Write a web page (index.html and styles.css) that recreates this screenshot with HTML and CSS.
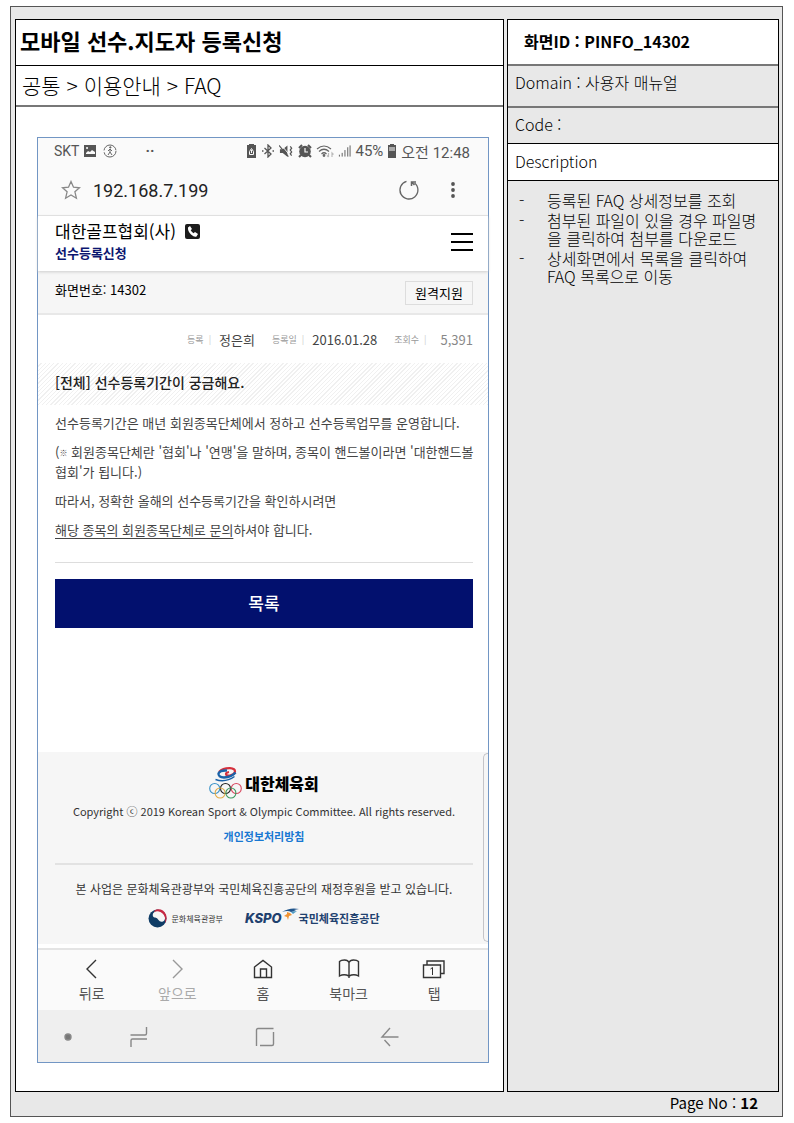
FILE: index.html
```html
<!DOCTYPE html>
<html lang="ko">
<head>
  <meta charset="UTF-8" />
  <meta name="viewport" content="width=device-width, initial-scale=1" />
  <title>PINFO_14302 - FAQ</title>
  <link rel="stylesheet" href="styles.css">
</head>
<body>
<div class="sheet">
  <div class="panels">
    <main class="panel panel-screen">
      <h1>모바일 선수.지도자 등록신청</h1>
      <p class="path">공통 &gt; 이용안내 &gt; FAQ</p>

      <div class="phone">
        <!-- 상태바 -->
        <div class="status">
          <span>SKT</span>
          <svg width="14" height="14" viewBox="0 0 14 14"><path fill="#555" fill-rule="evenodd" d="M1 1h12v12H1zM3 10h9V8L9 6 7 8 5 7 3 9zM4 3a1 1 0 1 0 .1 0z"/></svg>
          <svg class="walk" width="14" height="14" viewBox="0 0 14 14" fill="none" stroke="#666"><circle cx="7" cy="7" r="6" stroke-dasharray="17 2"/><circle cx="7.3" cy="3.4" r=".7" fill="#666"/><path d="M7 5v3l2 3M7 8l-2 3M5 7l2-2 2 2"/></svg>
          <span class="dots">··</span>
          <div class="status-right">
            <svg width="11" height="14" viewBox="0 0 11 14"><path fill="#555" d="M3 0h5v1h2v13H1V1h2z"/><path fill="none" stroke="#fafafa" d="M3.500 7.500l2-3 2 3M3.500 7.500v3h4v-3M5.500 6v3"/></svg>
            <svg width="14" height="14" viewBox="0 0 14 14" fill="none" stroke="#555" stroke-width="1.300"><path d="M3.500 4l6.500 6-3 3V1l3 3-6.500 6"/><path d="M1 7h1.500M11.500 7H13"/></svg>
            <svg width="15" height="14" viewBox="0 0 16 14"><path fill="#555" d="M1 5h3l5-4v12L4 9H1z"/><path fill="none" stroke="#fafafa" stroke-width="1" d="M2 0l9 11"/><path fill="none" stroke="#555" stroke-width="1.300" d="M0 1l10 12M12 2l1.500 2-1.500 2 1.500 2-1.500 2 1.500 2"/></svg>
            <svg width="14" height="14" viewBox="0 0 14 14"><circle cx="7" cy="7.500" r="5.800" fill="#555"/><path fill="none" stroke="#555" stroke-width="2" d="M1 4l3-3M10 1l3 3M3 11l-2 2M11 11l2 2"/><path fill="none" stroke="#fafafa" stroke-width="1.200" d="M7 4v4h3"/></svg>
            <svg width="18" height="14" viewBox="0 0 18 14" fill="none" stroke="#666" stroke-width="1.200"><path d="M1 5q7-6 14 0M3 7.500q5-4.500 10 0M5.500 10q2.500-2.500 5 0"/><circle cx="8" cy="11.500" r=".8" fill="#666"/><path stroke="#bbb" d="M12.500 9v4M11 11.500l1.500 1.500M16 13V9l1.500 1.500"/></svg>
            <svg width="13" height="14" viewBox="0 0 14 14" fill="none" stroke="#555"><path d="M1.500 11v2M4.500 9v4M7.500 6v7M10.500 3v10M13 1v12"/></svg>
            <span>45%</span>
            <svg width="10" height="14" viewBox="0 0 10 14"><path fill="#555" d="M3 0h4v1h2v13H1V1h2z"/><path fill="#aaa" d="M2 3h6v4H2z"/></svg>
            <span>오전 12:48</span>
          </div>
        </div>

        <!-- 주소창 -->
        <div class="address">
          <button type="button" aria-label="즐겨찾기"><svg width="20" height="20" viewBox="0 0 20 20" fill="none" stroke="#888" stroke-width="1.300"><path d="M10 1.500l2.500 5.700 6 .6-4.600 4 1.500 6.400L10 15l-5.400 3.200 1.500-6.400-4.600-4 6-.6z"/></svg></button>
          <input type="text" value="192.168.7.199" aria-label="주소">
          <button type="button" aria-label="새로고침"><svg width="22" height="22" viewBox="0 0 22 22" fill="none" stroke="#666" stroke-width="1.300"><path d="M8.500 2.300a9 9 0 1 0 8 1.600"/><path d="M13.500 7V3h4.500M13.500 3l3 3" stroke-width="1.500"/></svg></button>
          <button type="button" class="more" aria-label="더보기"><svg width="6" height="18" viewBox="0 0 6 18" fill="#555"><circle cx="3" cy="3" r="1.900"/><circle cx="3" cy="9" r="1.900"/><circle cx="3" cy="15" r="1.900"/></svg></button>
        </div>

        <header>
          <div>
            <h2>대한골프협회(사)
              <svg width="15" height="15" viewBox="0 0 15 15"><rect width="15" height="15" rx="2" fill="#1c1c1c"/><path fill="#fff" d="M3 3.500L5 2l2 3-1.300 1.300Q6.500 8 8.500 9.300L10 8l3 2-1.500 2.500Q9.500 13.500 6 10.500 2.500 7 3 3.500z"/></svg>
            </h2>
            <a class="sub" href="#">선수등록신청</a>
          </div>
          <button type="button" class="menu" aria-label="메뉴"><span></span><span></span><span></span></button>
        </header>

        <div class="screen-no">
          <span>화면번호: 14302</span>
          <button type="button">원격지원</button>
        </div>

        <article>
          <div class="meta">
            <small>등록</small><b>정은희</b>
            <small>등록일</small><b>2016.01.28</b>
            <small>조회수</small><b class="count">5,391</b>
          </div>
          <h3>[전체] 선수등록기간이 궁금해요.</h3>
          <div class="answer">
            <p>선수등록기간은 매년 회원종목단체에서 정하고 선수등록업무를 운영합니다.</p>
            <p>(<span class="mark">※</span> 회원종목단체란 '협회'나 '연맹'을 말하며, 종목이 핸드볼이라면 '대한핸드볼<br>협회'가 됩니다.)</p>
            <p>따라서, 정확한 올해의 선수등록기간을 확인하시려면</p>
            <p><u>해당 종목의 회원종목단체로 문의</u>하셔야 합니다.</p>
          </div>
          <button type="button" class="list-btn">목록</button>
        </article>

        <footer>
          <div class="koc">
            <svg width="33" height="32" viewBox="0 0 33 32" fill="none">
              <path stroke="#d5303c" stroke-width="2.200" d="M10 5Q14 1 21 1.200q5 .3 5 3.300-.5 3-5 4-4 .3-4-1.500 0-1.500 3-2"/>
              <path stroke="#1b62a8" stroke-width="2.400" d="M18 3.500q-7-.5-8.500 3Q9 10 15 10.500q8-.5 11.500-5"/>
              <path stroke="#1b62a8" stroke-width="1.500" d="M6.500 12.500q10 3.500 19-3"/>
              <g stroke-width="1.100"><circle cx="5.700" cy="21.500" r="5" stroke="#3a92c8"/><circle cx="16.500" cy="21.500" r="5" stroke="#222"/><circle cx="27.300" cy="21.500" r="5" stroke="#d94a61"/><circle cx="11.100" cy="26" r="5" stroke="#e2ab45"/><circle cx="21.900" cy="26" r="5" stroke="#3c9a60"/></g>
            </svg>
            <strong>대한체육회</strong>
          </div>
          <p class="copy">Copyright ⓒ 2019 Korean Sport &amp; Olympic Committee. All rights reserved.</p>
          <a class="privacy" href="#">개인정보처리방침</a>
          <hr>
          <p class="support">본 사업은 문화체육관광부와 국민체육진흥공단의 재정후원을 받고 있습니다.</p>
          <div class="sponsors">
            <svg width="19" height="19" viewBox="0 0 19 19"><circle cx="9.500" cy="9.500" r="9" fill="#0f3c66"/><path fill="#f6f6f6" d="M5 4.500Q7 1 11 2q5 1 6 5.500.5 3.500-2 5-3 1-4.500-1.500Q9 8 6.500 8.500 4 7.500 5 4.500z"/><path fill="#c72843" d="M8 .6q7-1.500 10 5 1.500 5-1 8.600Q18.300 6 12.500 3 9 1.300 6 3.200 6.500 1.200 8 .6z"/></svg>
            <span class="mcst">문화체육관광부</span>
            <span class="kspo">KSPO</span>
            <svg class="wing" width="17" height="16" viewBox="0 0 17 16"><path fill="#20558c" d="M0 4Q8-1 17 1l-5 1 2 1-5 1Q6 2 0 4z"/><path fill="#4d9cc4" d="M9 4l6-1-4 3z"/><path fill="#ef9435" d="M5 4l3 1 2 2-3 1-1 4-1-3-3-1 3-2z"/></svg>
            <span class="kspo-name">국민체육진흥공단</span>
          </div>
          <i class="scroll-edge"></i>
        </footer>

        <nav>
          <button type="button"><svg width="24" height="22" viewBox="0 0 24 22"><path d="M16 2l-9 9 9 9"/></svg>뒤로</button>
          <button type="button" disabled><svg width="24" height="22" viewBox="0 0 24 22"><path d="M8 2l9 9-9 9"/></svg>앞으로</button>
          <button type="button"><svg width="24" height="22" viewBox="0 0 24 22"><path d="M3.500 9L12 2.500 20.500 9v10.500h-5V11h-6v8.500h-6zM9.500 19.500h6"/></svg>홈</button>
          <button type="button"><svg width="24" height="22" viewBox="0 0 24 22"><path d="M12 20V4.500Q11 2 7.500 2 4 2 2.500 3.500V18q4.500-2.500 9.500 0M12 18q5-2.500 9.500 0V3.500Q20 2 16.500 2 13 2 12 4.500"/></svg>북마크</button>
          <button type="button"><svg width="24" height="22" viewBox="0 0 24 22"><path d="M1.500 7h17v12.500h-17zM5 7V3h17v12.500h-3.500"/><path stroke-width="1" d="M8.500 11l2-1.500V17"/></svg>탭</button>
        </nav>

        <!-- 시스템 버튼 -->
        <div class="system">
          <svg width="8" height="8" viewBox="0 0 8 8"><circle cx="4" cy="4" r="3" fill="#777"/></svg>
          <svg width="20" height="22" viewBox="0 0 20 22"><path d="M1.500 9H16q1.500 0 1.500-1.500V1M2 21v-6.500Q2 13 3.500 13H18"/></svg>
          <svg width="20" height="20" viewBox="0 0 20 20"><path d="M1.500 19V3q0-1.500 1.500-1.500h15.500M18.500 5v12q0 1.500-1.500 1.500H5"/></svg>
          <svg width="20" height="20" viewBox="0 0 20 20"><path d="M18.500 10H2l8-9M4.500 13l5.500 6"/></svg>
        </div>
      </div>
    </main>

    <aside class="panel panel-info">
      <h2 class="screen-id">화면ID : PINFO_14302</h2>
      <p class="domain">Domain : 사용자 매뉴얼</p>
      <p class="code">Code :</p>
      <p class="desc-title">Description</p>
      <ul>
        <li>등록된 FAQ 상세정보를 조회</li>
        <li>첨부된 파일이 있을 경우 파일명<br>을 클릭하여 첨부를 다운로드</li>
        <li>상세화면에서 목록을 클릭하여<br>FAQ 목록으로 이동</li>
      </ul>
    </aside>
  </div>
  <p class="page-no">Page No : <b>12</b></p>
</div>
</body>
</html>
```
FILE: styles.css
```css
* {
  box-sizing: border-box;
}

body {
  margin: 0;
  padding: 6px 11px 6px 10px;
  min-height: 100vh;
  display: flex;
  font-family: "Noto Sans CJK KR", sans-serif;
  background: #fff;
  color: #000;
}

h1, h2, h3, p, ul {
  margin: 0;
  padding: 0;
}

button {
  font-family: inherit;
  border: none;
  background: none;
  padding: 0;
  cursor: pointer;
}

svg {
  display: block;
  flex-shrink: 0;
}

.sheet {
  flex: 1;
  display: flex;
  flex-direction: column;
  padding: 12px 3px 0 4px;
  background: #e8e8e8;
  border: 1px solid #555;
}

.panels {
  flex: 1;
  display: grid;
  grid-template-columns: minmax(0, 489fr) minmax(0, 272fr);
  gap: 3px;
}

.panel {
  display: flex;
  flex-direction: column;
  border: 1px solid #000;
}

.panel-screen {
  background: #fff;
}

h1 {
  height: 46px;
  padding-left: 4px;
  line-height: 40px;
  font-size: 22px;
  border-bottom: 1px solid #000;
}

.path {
  height: 41px;
  padding-left: 6px;
  line-height: 38px;
  font-size: 21px;
  font-weight: 300;
  border-bottom: 2px solid #777;
}

/* ===== 휴대폰 화면 ===== */
.phone {
  flex: 1;
  display: flex;
  flex-direction: column;
  margin: 30px 14px 28px 21px;
  border: 1px solid #7296c4;
  background: #fff;
}

.status {
  display: flex;
  align-items: center;
  gap: 4px;
  height: 27px;
  padding: 0 18px 1px 16px;
  font-family: Roboto, "Noto Sans CJK KR", sans-serif;
  font-size: 15px;
  color: #555;
  background: #fafafa;
}

.status > span:first-child {
  font-size: 14px;
}

.walk {
  margin-left: 2px;
}

.dots {
  margin-left: 24px;
  font-weight: bold;
}

.status-right {
  display: flex;
  align-items: center;
  gap: 4px;
  margin-left: auto;
}

.address {
  display: flex;
  align-items: center;
  height: 51px;
  padding: 0 32px 0 23px;
  border-bottom: 1px solid #e4e4e4;
  background: #fafafa;
}

.address input {
  flex: 1;
  min-width: 0;
  margin-left: 12px;
  padding: 0;
  border: none;
  background: none;
  font-family: Roboto, sans-serif;
  font-size: 18px;
  color: #222;
}

.more {
  margin-left: 30px;
}

header {
  display: flex;
  justify-content: space-between;
  height: 55px;
  padding: 3px 15px 0 17px;
  box-shadow: 0 1px 3px #ccc;
  position: relative;
}

header h2 {
  display: flex;
  align-items: center;
  gap: 9px;
  line-height: 24px;
  font-size: 17px;
  font-weight: 400;
}

.sub {
  display: block;
  line-height: 19px;
  font-size: 13px;
  font-weight: bold;
  color: #0b1670;
  text-decoration: none;
}

.menu {
  width: 22px;
  height: 18px;
  margin-top: 14px;
  display: flex;
  flex-direction: column;
  justify-content: space-between;
}

.menu span {
  height: 2px;
  background: #000;
}

.screen-no {
  display: flex;
  justify-content: space-between;
  height: 44px;
  padding: 10px 15px 0 17px;
  font-size: 13px;
  line-height: 18px;
  background: #f6f6f6;
  border-bottom: 2px solid #e8e8e8;
}

.screen-no button {
  width: 68px;
  height: 24px;
  font-size: 13px;
  line-height: 18px;
  border: 1px solid #ddd;
}

.meta {
  display: flex;
  align-items: center;
  justify-content: flex-end;
  height: 48px;
  padding: 0 15px 0;
  font-size: 13px;
}

.meta small {
  margin-left: 17px;
  font-size: 9px;
  color: #999;
}

.meta small::after {
  content: "|";
  margin: 0 8px 0 5px;
  color: #ccc;
}

.meta b {
  font-weight: 400;
  color: #444;
}

.meta .count {
  margin-left: 6px;
  color: #888;
}

article h3 {
  height: 42px;
  padding-left: 17px;
  line-height: 38px;
  font-size: 14px;
  font-weight: 500;
  color: #222;
  background: repeating-linear-gradient(135deg, #fff 0, #fff 2px, #f0f0f0 2px, #f0f0f0 3px);
}

.answer {
  margin: 0 15px 16px 17px;
  padding: 8px 0 23px;
  font-size: 13px;
  line-height: 19px;
  color: #444;
  border-bottom: 1px solid #ddd;
}

.answer p {
  margin-bottom: 10px;
  white-space: nowrap;
}

.answer p:last-child {
  margin-bottom: 0;
}

.mark {
  font-size: 8px;
  vertical-align: 1px;
}

u {
  text-underline-offset: 3px;
}

.list-btn {
  display: block;
  width: calc(100% - 32px);
  height: 49px;
  margin: 0 15px 0 17px;
  padding-bottom: 3px;
  font-size: 17px;
  font-weight: 500;
  color: #fff;
  background: #02106e;
}

footer {
  position: relative;
  height: 192px;
  margin-top: auto;
  padding: 15px 15px 0 17px;
  text-align: center;
  font-size: 12px;
  color: #333;
  background: #f6f6f6;
}

.koc {
  display: flex;
  justify-content: center;
  align-items: center;
  gap: 3px;
  height: 32px;
}

.koc strong {
  font-size: 16px;
  font-weight: 900;
  color: #000;
}

.copy {
  margin-top: 2px;
  line-height: 20px;
  font-size: 11px;
}

.privacy {
  display: block;
  margin-top: 5px;
  line-height: 20px;
  font-size: 11px;
  font-weight: bold;
  color: #1878d2;
  text-decoration: none;
}

hr {
  margin: 17px 0 14px;
  border: none;
  border-top: 2px solid #e2e2e2;
}

.support {
  line-height: 20px;
}

.sponsors {
  display: flex;
  justify-content: center;
  align-items: center;
  height: 20px;
  margin-top: 9px;
}

.mcst {
  margin: 0 22px 0 4px;
  font-size: 8px;
}

.kspo {
  font-family: Inter, sans-serif;
  font-size: 13px;
  font-style: italic;
  font-weight: 800;
  color: #20406e;
}

.wing {
  align-self: flex-start;
}

.kspo-name {
  font-size: 11px;
  font-weight: bold;
  color: #20406e;
}

/* 스크롤 영역 가장자리 */
.scroll-edge {
  position: absolute;
  top: 1px;
  right: 0;
  bottom: 2px;
  width: 5px;
  border: 1px solid #c4c4c8;
  border-right: none;
  border-radius: 5px 0 0 5px;
}

nav {
  display: grid;
  grid-template-columns: repeat(5, 1fr);
  height: 62px;
  margin-top: 4px;
  padding: 8px 11px 0;
  border-top: 2px solid #e4e4e4;
  background: #fafafa;
}

nav button {
  display: flex;
  flex-direction: column;
  align-items: center;
  gap: 3px;
  font-size: 14px;
  line-height: 20px;
  color: #555;
}

nav button:disabled {
  color: #aaa;
}

nav svg {
  fill: none;
  stroke: #333;
  stroke-width: 1.4;
}

nav button:disabled svg {
  stroke: #999;
}

.system {
  display: flex;
  align-items: center;
  justify-content: space-between;
  height: 52px;
  padding: 2px 88px 0 26px;
  background: #efefef;
}

.system svg {
  fill: none;
  stroke: #888;
  stroke-width: 1.4;
}

.system svg:nth-child(2) {
  margin-left: -48px;
}

/* ===== 화면 설명 ===== */
.panel-info {
  font-size: 16px;
  font-weight: 300;
}

.screen-id {
  height: 46px;
  padding-left: 16px;
  line-height: 42px;
  font-size: 16px;
  background: #fff;
  border-bottom: 2px solid #777;
}

.domain {
  height: 42px;
  padding-left: 7px;
  line-height: 32px;
  border-bottom: 2px solid #777;
}

.code {
  height: 36px;
  padding-left: 7px;
  line-height: 32px;
  border-bottom: 1px solid #000;
}

.desc-title {
  height: 37px;
  padding-left: 7px;
  line-height: 34px;
  background: #fff;
  border-bottom: 1px solid #000;
}

.panel-info ul {
  padding: 10px 4px 0 11px;
  list-style: none;
  line-height: 18px;
}

.panel-info li {
  display: flex;
  margin-bottom: 2px;
  white-space: nowrap;
}

.panel-info li::before {
  content: "-";
  flex: 0 0 28px;
}

.page-no {
  height: 24px;
  padding-right: 21px;
  line-height: 21px;
  text-align: right;
  font-size: 15px;
}
```
